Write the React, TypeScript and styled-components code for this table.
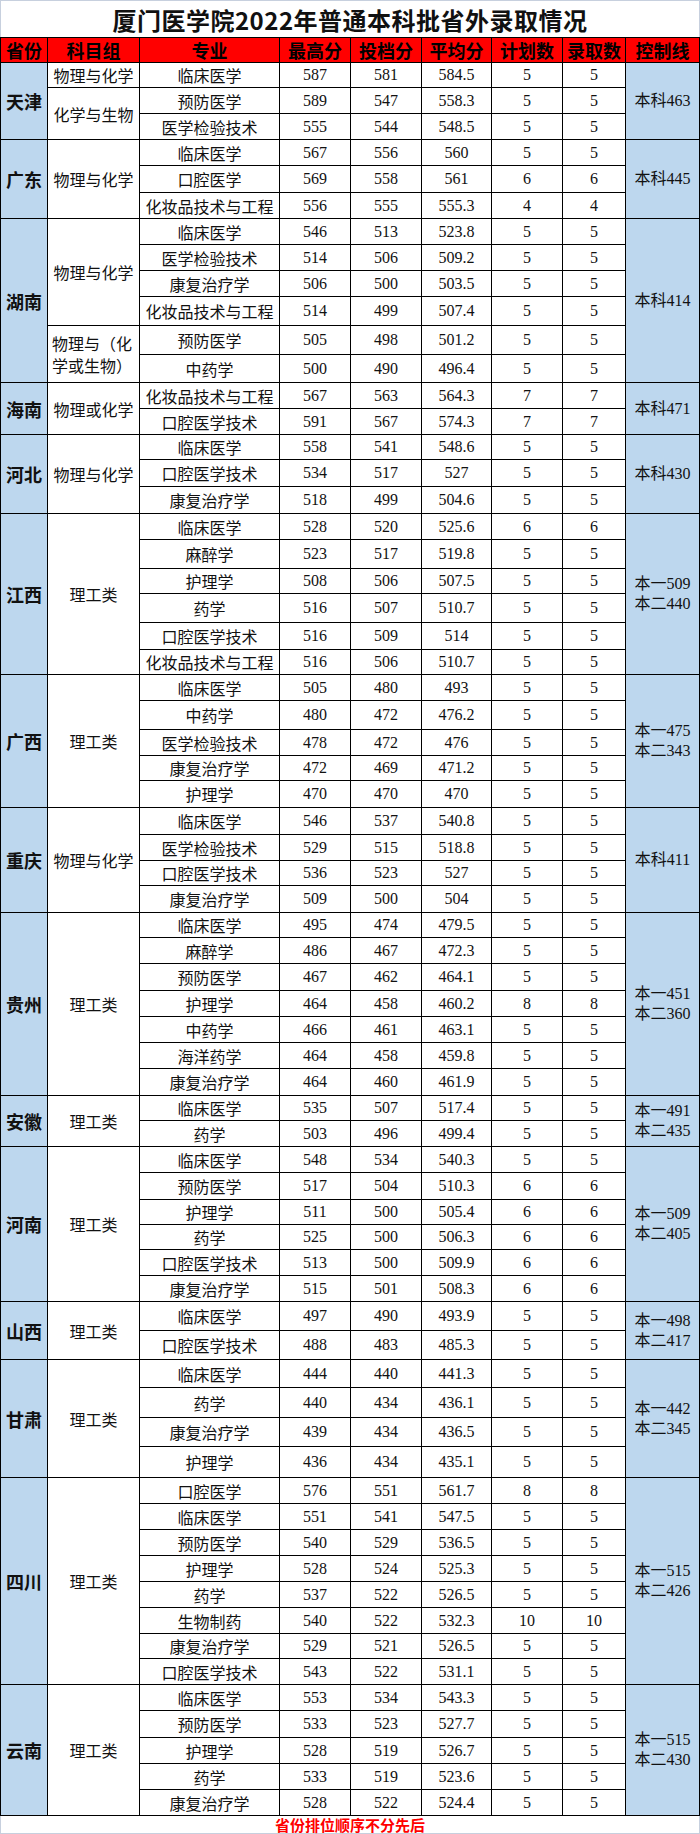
import React from "react";
import styled, { createGlobalStyle } from "styled-components";

const GlobalStyle = createGlobalStyle`
  html, body { margin: 0; padding: 0; background: #ffffff; }
  body { font-family: "Noto Sans CJK SC", "Noto Sans", sans-serif; color: #000; }
`;

type Row = [string, number, number, string, number, number];
type Group = { name: string; rows: number };
type Province = { name: string; groups: Group[]; control: string[]; rows: Row[] };

const DATA: Province[] = [
  {
    name: "天津",
    groups: [{ name: "物理与化学", rows: 1 }, { name: "化学与生物", rows: 2 }],
    control: ["本科463"],
    rows: [
      ["临床医学", 587, 581, "584.5", 5, 5],
      ["预防医学", 589, 547, "558.3", 5, 5],
      ["医学检验技术", 555, 544, "548.5", 5, 5],
    ],
  },
  {
    name: "广东",
    groups: [{ name: "物理与化学", rows: 3 }],
    control: ["本科445"],
    rows: [
      ["临床医学", 567, 556, "560", 5, 5],
      ["口腔医学", 569, 558, "561", 6, 6],
      ["化妆品技术与工程", 556, 555, "555.3", 4, 4],
    ],
  },
  {
    name: "湖南",
    groups: [{ name: "物理与化学", rows: 4 }, { name: "物理与（化学或生物）", rows: 2 }],
    control: ["本科414"],
    rows: [
      ["临床医学", 546, 513, "523.8", 5, 5],
      ["医学检验技术", 514, 506, "509.2", 5, 5],
      ["康复治疗学", 506, 500, "503.5", 5, 5],
      ["化妆品技术与工程", 514, 499, "507.4", 5, 5],
      ["预防医学", 505, 498, "501.2", 5, 5],
      ["中药学", 500, 490, "496.4", 5, 5],
    ],
  },
  {
    name: "海南",
    groups: [{ name: "物理或化学", rows: 2 }],
    control: ["本科471"],
    rows: [
      ["化妆品技术与工程", 567, 563, "564.3", 7, 7],
      ["口腔医学技术", 591, 567, "574.3", 7, 7],
    ],
  },
  {
    name: "河北",
    groups: [{ name: "物理与化学", rows: 3 }],
    control: ["本科430"],
    rows: [
      ["临床医学", 558, 541, "548.6", 5, 5],
      ["口腔医学技术", 534, 517, "527", 5, 5],
      ["康复治疗学", 518, 499, "504.6", 5, 5],
    ],
  },
  {
    name: "江西",
    groups: [{ name: "理工类", rows: 6 }],
    control: ["本一509", "本二440"],
    rows: [
      ["临床医学", 528, 520, "525.6", 6, 6],
      ["麻醉学", 523, 517, "519.8", 5, 5],
      ["护理学", 508, 506, "507.5", 5, 5],
      ["药学", 516, 507, "510.7", 5, 5],
      ["口腔医学技术", 516, 509, "514", 5, 5],
      ["化妆品技术与工程", 516, 506, "510.7", 5, 5],
    ],
  },
  {
    name: "广西",
    groups: [{ name: "理工类", rows: 5 }],
    control: ["本一475", "本二343"],
    rows: [
      ["临床医学", 505, 480, "493", 5, 5],
      ["中药学", 480, 472, "476.2", 5, 5],
      ["医学检验技术", 478, 472, "476", 5, 5],
      ["康复治疗学", 472, 469, "471.2", 5, 5],
      ["护理学", 470, 470, "470", 5, 5],
    ],
  },
  {
    name: "重庆",
    groups: [{ name: "物理与化学", rows: 4 }],
    control: ["本科411"],
    rows: [
      ["临床医学", 546, 537, "540.8", 5, 5],
      ["医学检验技术", 529, 515, "518.8", 5, 5],
      ["口腔医学技术", 536, 523, "527", 5, 5],
      ["康复治疗学", 509, 500, "504", 5, 5],
    ],
  },
  {
    name: "贵州",
    groups: [{ name: "理工类", rows: 7 }],
    control: ["本一451", "本二360"],
    rows: [
      ["临床医学", 495, 474, "479.5", 5, 5],
      ["麻醉学", 486, 467, "472.3", 5, 5],
      ["预防医学", 467, 462, "464.1", 5, 5],
      ["护理学", 464, 458, "460.2", 8, 8],
      ["中药学", 466, 461, "463.1", 5, 5],
      ["海洋药学", 464, 458, "459.8", 5, 5],
      ["康复治疗学", 464, 460, "461.9", 5, 5],
    ],
  },
  {
    name: "安徽",
    groups: [{ name: "理工类", rows: 2 }],
    control: ["本一491", "本二435"],
    rows: [
      ["临床医学", 535, 507, "517.4", 5, 5],
      ["药学", 503, 496, "499.4", 5, 5],
    ],
  },
  {
    name: "河南",
    groups: [{ name: "理工类", rows: 6 }],
    control: ["本一509", "本二405"],
    rows: [
      ["临床医学", 548, 534, "540.3", 5, 5],
      ["预防医学", 517, 504, "510.3", 6, 6],
      ["护理学", 511, 500, "505.4", 6, 6],
      ["药学", 525, 500, "506.3", 6, 6],
      ["口腔医学技术", 513, 500, "509.9", 6, 6],
      ["康复治疗学", 515, 501, "508.3", 6, 6],
    ],
  },
  {
    name: "山西",
    groups: [{ name: "理工类", rows: 2 }],
    control: ["本一498", "本二417"],
    rows: [
      ["临床医学", 497, 490, "493.9", 5, 5],
      ["口腔医学技术", 488, 483, "485.3", 5, 5],
    ],
  },
  {
    name: "甘肃",
    groups: [{ name: "理工类", rows: 4 }],
    control: ["本一442", "本二345"],
    rows: [
      ["临床医学", 444, 440, "441.3", 5, 5],
      ["药学", 440, 434, "436.1", 5, 5],
      ["康复治疗学", 439, 434, "436.5", 5, 5],
      ["护理学", 436, 434, "435.1", 5, 5],
    ],
  },
  {
    name: "四川",
    groups: [{ name: "理工类", rows: 8 }],
    control: ["本一515", "本二426"],
    rows: [
      ["口腔医学", 576, 551, "561.7", 8, 8],
      ["临床医学", 551, 541, "547.5", 5, 5],
      ["预防医学", 540, 529, "536.5", 5, 5],
      ["护理学", 528, 524, "525.3", 5, 5],
      ["药学", 537, 522, "526.5", 5, 5],
      ["生物制药", 540, 522, "532.3", 10, 10],
      ["康复治疗学", 529, 521, "526.5", 5, 5],
      ["口腔医学技术", 543, 522, "531.1", 5, 5],
    ],
  },
  {
    name: "云南",
    groups: [{ name: "理工类", rows: 5 }],
    control: ["本一515", "本二430"],
    rows: [
      ["临床医学", 553, 534, "543.3", 5, 5],
      ["预防医学", 533, 523, "527.7", 5, 5],
      ["护理学", 528, 519, "526.7", 5, 5],
      ["药学", 533, 519, "523.6", 5, 5],
      ["康复治疗学", 528, 522, "524.4", 5, 5],
    ],
  },
];

// y positions of the horizontal grid lines (header top .. last data row bottom)
const LINES = [
  37, 62, 87, 113, 139, 165, 192, 218, 244, 270, 296, 325, 354, 382, 408, 434,
  459, 486, 513, 539, 568, 593, 622, 649, 674, 700, 729, 755, 780, 807, 834,
  860, 885, 912, 937, 963, 990, 1016, 1042, 1068, 1095, 1120, 1146, 1172, 1199,
  1224, 1249, 1275, 1301, 1330, 1359, 1387, 1417, 1446, 1477, 1503, 1529, 1555,
  1581, 1607, 1633, 1658, 1684, 1710, 1737, 1763, 1789, 1815,
];

const HEADERS = ["省份", "科目组", "专业", "最高分", "投档分", "平均分", "计划数", "录取数", "控制线"];

const Sheet = styled.div`
  width: 700px;
  display: flex;
  flex-direction: column;
  background: #fff;
`;

const Title = styled.h1`
  margin: 0;
  height: 36px;
  border-top: 1px solid #c7d0de;
  border-left: 1px solid #c7d0de;
  border-right: 1px solid #c7d0de;
  display: flex;
  align-items: center;
  justify-content: center;
  font-family: "Noto Sans CJK SC", sans-serif;
  font-weight: 700;
  font-size: 24px;
  letter-spacing: 0.5px;
  color: #111;
`;

const Grid = styled.div<{ $rows: string }>`
  display: grid;
  grid-template-columns: 46px 91px 139px 70px 70px 69px 70px 62px 73px;
  grid-template-rows: ${(p) => p.$rows};
  gap: 1px;
  padding: 1px;
  background: #000;
`;

const HeadCell = styled.div`
  background: #ff0000;
  display: flex;
  align-items: center;
  justify-content: center;
  font-family: "Noto Sans CJK SC", sans-serif;
  font-weight: 700;
  font-size: 18px;
  white-space: nowrap;
  color: #000;
`;

const Cell = styled.div<{ $span?: number }>`
  grid-row: span ${(p) => p.$span ?? 1};
  background: #fff;
  display: flex;
  align-items: center;
  justify-content: center;
  font-family: "Liberation Serif", "Noto Sans CJK SC", serif;
  font-size: 16px;
  line-height: 20px;
  white-space: nowrap;
  color: #111;
`;

const ProvinceCell = styled(Cell)`
  background: #bdd7ee;
  font-family: "Noto Sans CJK SC", sans-serif;
  font-weight: 700;
  font-size: 18px;
`;

const GroupCell = styled(Cell)`
  font-family: "Noto Sans CJK SC", sans-serif;
  white-space: normal;
  text-align: left;
  padding: 0 4px;
  line-height: 22px;
  word-break: break-all;
`;

const MajorCell = styled(Cell)`
  font-family: "Noto Sans CJK SC", sans-serif;
`;

const ControlCell = styled(Cell)`
  background: #bdd7ee;
  flex-direction: column;
`;

const Footer = styled.div`
  height: 17px;
  border-left: 1px solid #c7d0de;
  border-right: 1px solid #c7d0de;
  border-bottom: 1px solid #c7d0de;
  display: flex;
  align-items: center;
  justify-content: center;
  font-family: "Noto Sans CJK SC", sans-serif;
  font-weight: 700;
  font-size: 15px;
  color: #ff0000;
  line-height: 16px;
`;

export default function App() {
  const rows: string[] = [];
  for (let i = 0; i < LINES.length - 1; i++) rows.push(`${LINES[i + 1] - LINES[i] - 1}px`);

  const cells: React.ReactNode[] = [];
  DATA.forEach((p, pi) => {
    const starts = new Map<number, Group>();
    let acc = 0;
    p.groups.forEach((g) => {
      starts.set(acc, g);
      acc += g.rows;
    });
    p.rows.forEach((r, ri) => {
      const key = `${pi}-${ri}`;
      if (ri === 0)
        cells.push(
          <ProvinceCell key={`${key}-p`} $span={p.rows.length}>
            {p.name}
          </ProvinceCell>
        );
      const g = starts.get(ri);
      if (g)
        cells.push(
          <GroupCell key={`${key}-g`} $span={g.rows}>
            {g.name}
          </GroupCell>
        );
      cells.push(<MajorCell key={`${key}-m`}>{r[0]}</MajorCell>);
      cells.push(<Cell key={`${key}-a`}>{r[1]}</Cell>);
      cells.push(<Cell key={`${key}-b`}>{r[2]}</Cell>);
      cells.push(<Cell key={`${key}-c`}>{r[3]}</Cell>);
      cells.push(<Cell key={`${key}-d`}>{r[4]}</Cell>);
      cells.push(<Cell key={`${key}-e`}>{r[5]}</Cell>);
      if (ri === 0)
        cells.push(
          <ControlCell key={`${key}-k`} $span={p.rows.length}>
            {p.control.map((c) => (
              <span key={c}>{c}</span>
            ))}
          </ControlCell>
        );
    });
  });

  return (
    <>
      <GlobalStyle />
      <Sheet>
        <Title>厦门医学院2022年普通本科批省外录取情况</Title>
        <Grid $rows={rows.join(" ")}>
          {HEADERS.map((h) => (
            <HeadCell key={h}>{h}</HeadCell>
          ))}
          {cells}
        </Grid>
        <Footer>省份排位顺序不分先后</Footer>
      </Sheet>
    </>
  );
}
